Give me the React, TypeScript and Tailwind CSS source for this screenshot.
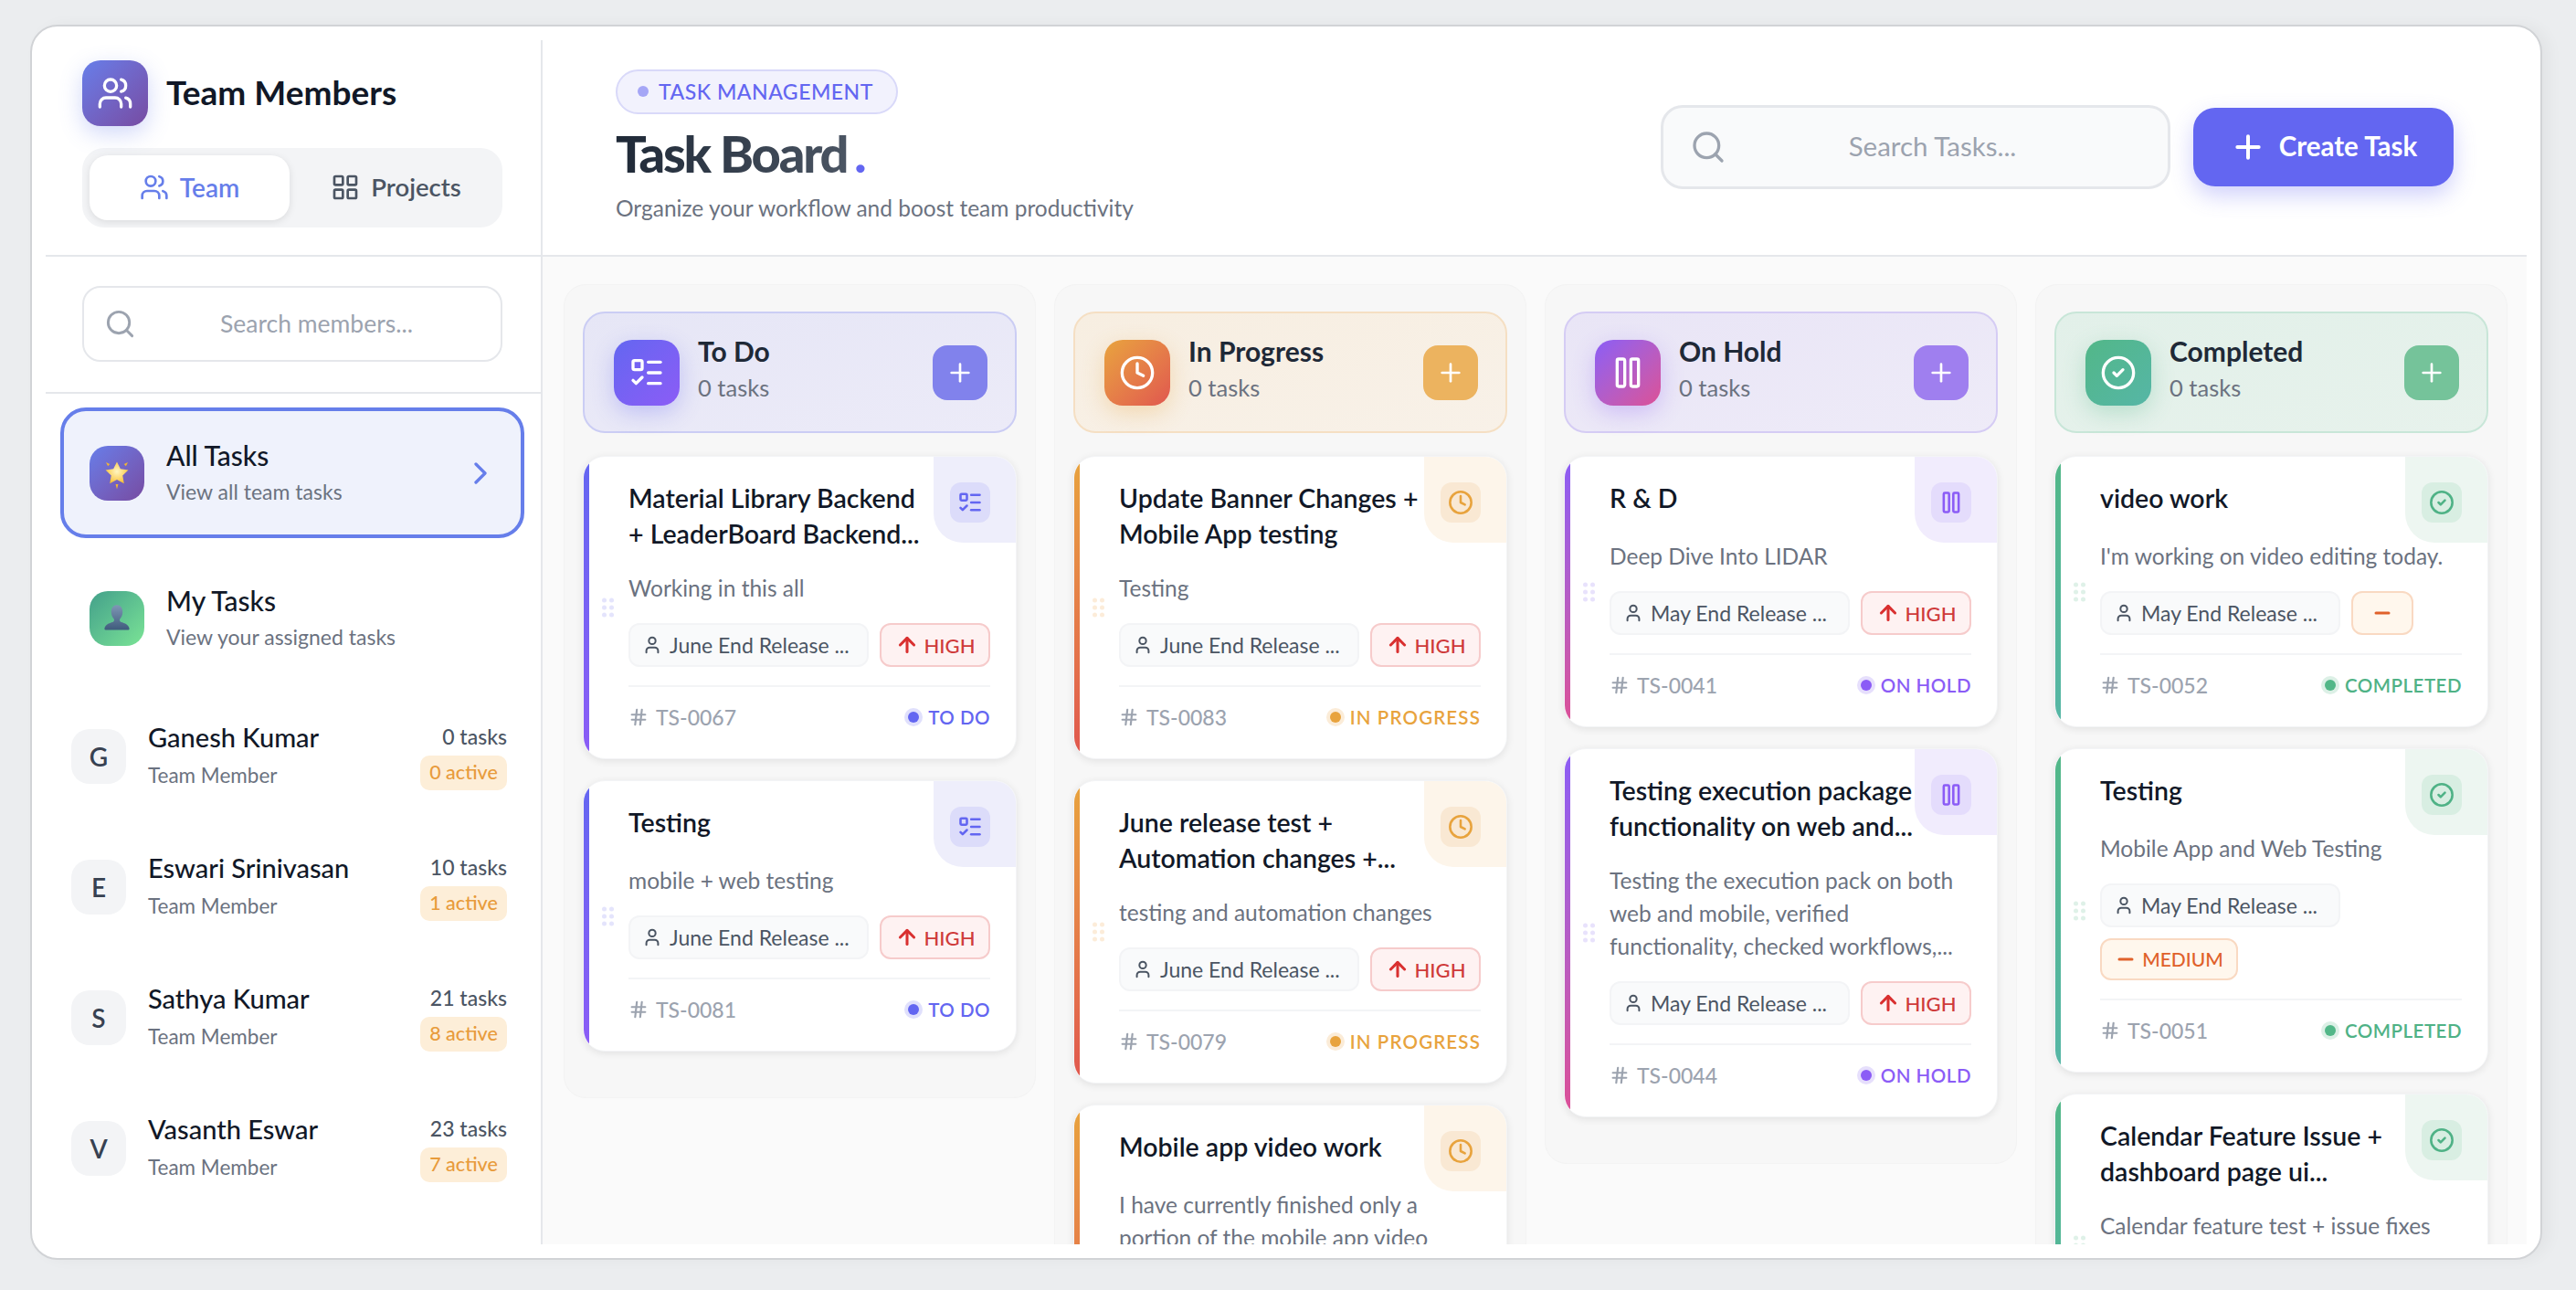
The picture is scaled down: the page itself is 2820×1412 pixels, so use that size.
import { ArrowUp, ChevronRight, CircleCheck, Clock, Hash, LayoutGrid, ListTodo, Minus, Pause, Plus, Search, User, Users } from "lucide-react";

type Status = "todo" | "progress" | "hold" | "done";
type Priority = "high" | "dash" | "medium";

interface Task {
  title: string[];
  desc: string[];
  release: string;
  priority: Priority;
  id: string;
}

const statusStyle = {
  todo: {
    name: "To Do",
    label: "TO DO",
    track: "tracking-[0.5px]",
    Icon: ListTodo,
    head: "bg-linear-to-br from-[#e6e6f6] to-[#ecebf8] border-[#cbcdf4]",
    grad: "bg-linear-to-br from-[#6366f1] to-[#8b5cf6]",
    bar: "bg-linear-to-b from-[#6366f1] to-[#8b5cf6]",
    glow: "shadow-[0_8px_24px_rgba(99,102,241,0.3)]",
    add: "bg-[#8182ec]",
    corner: "bg-[#eeeefb]",
    box: "bg-[#dcdcfa]",
    ink: "text-[#6366f1]",
    dot: "bg-[#6366f1]",
    halo: "bg-[#e0e0fc]",
    grip: "bg-[#e4e4fc]",
  },
  progress: {
    name: "In Progress",
    label: "IN PROGRESS",
    track: "tracking-[1.15px]",
    Icon: Clock,
    head: "bg-linear-to-br from-[#f7eee1] to-[#f8f1e8] border-[#f5dfc3]",
    grad: "bg-linear-to-br from-[#e8a33d] to-[#e0564e]",
    bar: "bg-linear-to-b from-[#e8a33d] to-[#e0564e]",
    glow: "shadow-[0_8px_24px_rgba(232,163,61,0.3)]",
    add: "bg-[#ecb35f]",
    corner: "bg-[#fdf5ea]",
    box: "bg-[#f9e8d3]",
    ink: "text-[#e8a33d]",
    dot: "bg-[#e8a33d]",
    halo: "bg-[#fbecd8]",
    grip: "bg-[#fcecd9]",
  },
  hold: {
    name: "On Hold",
    label: "ON HOLD",
    track: "tracking-[0.5px]",
    Icon: Pause,
    head: "bg-linear-to-br from-[#e9e5f6] to-[#eeebf8] border-[#d5ccf4]",
    grad: "bg-linear-to-br from-[#8b5cf6] to-[#dc4f96]",
    bar: "bg-linear-to-b from-[#8b5cf6] to-[#dc4f96]",
    glow: "shadow-[0_8px_24px_rgba(139,92,246,0.3)]",
    add: "bg-[#9f7fef]",
    corner: "bg-[#f1ecfd]",
    box: "bg-[#e4dcfc]",
    ink: "text-[#8b5cf6]",
    dot: "bg-[#8b5cf6]",
    halo: "bg-[#e6dffc]",
    grip: "bg-[#e8e2fc]",
  },
  done: {
    name: "Completed",
    label: "COMPLETED",
    track: "tracking-[0.5px]",
    Icon: CircleCheck,
    head: "bg-linear-to-br from-[#e2f0e9] to-[#e7f2ec] border-[#c8e6d8]",
    grad: "bg-linear-to-br from-[#52b788] to-[#56b6a6]",
    bar: "bg-linear-to-b from-[#52b788] to-[#56b6a6]",
    glow: "shadow-[0_8px_24px_rgba(82,183,136,0.3)]",
    add: "bg-[#75c39a]",
    corner: "bg-[#edf6f1]",
    box: "bg-[#d8eee2]",
    ink: "text-[#4fb286]",
    dot: "bg-[#52b788]",
    halo: "bg-[#dcf0e6]",
    grip: "bg-[#dff1e8]",
  },
} as const;

const columns: { status: Status; tasks: Task[] }[] = [
  {
    status: "todo",
    tasks: [
      { title: ["Material Library Backend", "+ LeaderBoard Backend..."], desc: ["Working in this all"], release: "June End Release ...", priority: "high", id: "TS-0067" },
      { title: ["Testing"], desc: ["mobile + web testing"], release: "June End Release ...", priority: "high", id: "TS-0081" },
    ],
  },
  {
    status: "progress",
    tasks: [
      { title: ["Update Banner Changes +", "Mobile App testing"], desc: ["Testing"], release: "June End Release ...", priority: "high", id: "TS-0083" },
      { title: ["June release test +", "Automation changes +..."], desc: ["testing and automation changes"], release: "June End Release ...", priority: "high", id: "TS-0079" },
      { title: ["Mobile app video work"], desc: ["I have currently finished only a", "portion of the mobile app video"], release: "June End Release ...", priority: "high", id: "TS-0078" },
    ],
  },
  {
    status: "hold",
    tasks: [
      { title: ["R & D"], desc: ["Deep Dive Into LIDAR"], release: "May End Release ...", priority: "high", id: "TS-0041" },
      { title: ["Testing execution package", "functionality on web and..."], desc: ["Testing the execution pack on both", "web and mobile, verified", "functionality, checked workflows,..."], release: "May End Release ...", priority: "high", id: "TS-0044" },
    ],
  },
  {
    status: "done",
    tasks: [
      { title: ["video work"], desc: ["I'm working on video editing today."], release: "May End Release ...", priority: "dash", id: "TS-0052" },
      { title: ["Testing"], desc: ["Mobile App and Web Testing"], release: "May End Release ...", priority: "medium", id: "TS-0051" },
      { title: ["Calendar Feature Issue +", "dashboard page ui..."], desc: ["Calendar feature test + issue fixes"], release: "May End Release ...", priority: "high", id: "TS-0050" },
    ],
  },
];

const members = [
  { initial: "G", name: "Ganesh Kumar", tasks: 0, active: 0 },
  { initial: "E", name: "Eswari Srinivasan", tasks: 10, active: 1 },
  { initial: "S", name: "Sathya Kumar", tasks: 21, active: 8 },
  { initial: "V", name: "Vasanth Eswar", tasks: 23, active: 7 },
];

function StarEmoji() {
  return (
    <svg width="36" height="36" viewBox="0 0 30 30">
      <defs>
        <radialGradient id="star" cx="50%" cy="45%" r="60%">
          <stop offset="0%" stopColor="#fff6c2" />
          <stop offset="100%" stopColor="#f7bd2e" />
        </radialGradient>
      </defs>
      <path d="M15 4.5l3.2 6.6 7.2 1-5.2 5 1.3 7.2-6.5-3.5-6.5 3.5 1.3-7.2-5.2-5 7.2-1z" fill="url(#star)" />
      <path d="M5 5l3.5 1.6L6.8 8.6zM25 5l-3.5 1.6 1.7 2zM13.8 25h2.4L15 29.5z" fill="#f2b632" />
    </svg>
  );
}

function PersonEmoji() {
  return (
    <svg width="34" height="34" viewBox="0 0 30 30">
      <defs>
        <linearGradient id="bust" x1="0" y1="0" x2="0" y2="1">
          <stop offset="0%" stopColor="#7f97b5" />
          <stop offset="100%" stopColor="#3f5b7c" />
        </linearGradient>
      </defs>
      <path d="M15 2c3.4 0 5.5 3 5.5 6.6 0 3-1.2 5.4-2.6 6.8-.5.6-.3 2 .5 2.6 1.4 1 8 1.6 8.6 6.8.1.7-.2 1.2-.9 1.2H3.9c-.7 0-1-.5-.9-1.2.6-5.2 7.2-5.8 8.6-6.8.8-.6 1-2 .5-2.6-1.4-1.4-2.6-3.8-2.6-6.8C9.5 5 11.6 2 15 2z" fill="url(#bust)" />
    </svg>
  );
}

function PriorityChip({ priority }: { priority: Priority }) {
  if (priority === "high") {
    return (
      <span className="flex h-[48px] w-[121px] items-center justify-center gap-[6px] rounded-[12px] border-2 border-[#f6cbcb] bg-[#fef2f2] text-[22px] font-medium text-[#cf3a3a]">
        <ArrowUp size={26} strokeWidth={2.8} className="text-[#d93030]" />
        HIGH
      </span>
    );
  }
  if (priority === "medium") {
    return (
      <span className="flex h-[46px] w-[151px] items-center justify-center gap-[6px] rounded-[12px] border-2 border-[#f9d9c2] bg-[#fff7ed] text-[21px] font-medium text-[#e0612a]">
        <Minus size={24} strokeWidth={3} />
        MEDIUM
      </span>
    );
  }
  return (
    <span className="flex h-[48px] w-[68px] items-center justify-center rounded-[12px] border-2 border-[#f9d9c2] bg-[#fff7ed] text-[#e0612a]">
      <Minus size={24} strokeWidth={3} />
    </span>
  );
}

function TaskCard({ task, status }: { task: Task; status: Status }) {
  const s = statusStyle[status];
  const Icon = s.Icon;
  return (
    <div className="relative shrink-0 overflow-hidden rounded-[24px] border border-[#f3f4f6] bg-white pb-[27px] pl-[49px] pr-[28px] pt-[26px] shadow-[0_2px_8px_rgba(0,0,0,0.09)]">
      <div className={`absolute bottom-0 left-0 top-0 w-[6px] ${s.bar}`} />
      <div className={`absolute right-0 top-0 flex h-[94px] w-[90px] justify-end rounded-bl-[32px] pr-[28px] pt-[28px] ${s.corner}`}>
        <span className={`flex size-[44px] items-center justify-center rounded-[12px] ${s.box} ${s.ink}`}>
          <Icon size={28} strokeWidth={2.2} />
        </span>
      </div>
      <div className="absolute left-[20px] top-1/2 grid -translate-y-1/2 grid-cols-2 gap-x-[3px] gap-y-[3px]">
        {[0, 1, 2, 3, 4, 5].map((i) => (
          <span key={i} className={`size-[5px] rounded-full ${s.grip}`} />
        ))}
      </div>
      <h3 className="min-h-[43px] whitespace-nowrap text-[28.5px] font-semibold leading-[39px] text-[#111827]">
        {task.title.map((line) => (
          <span key={line} className="block">{line}</span>
        ))}
      </h3>
      <div className="mt-[22px] whitespace-nowrap text-[24.5px] leading-[36px] text-[#6b7280]">
        {task.desc.map((line) => (
          <p key={line}>{line}</p>
        ))}
      </div>
      <div className="mt-[20px] flex flex-wrap gap-x-[12px] gap-y-[12px]">
        <span className="flex h-[48px] w-[263px] items-center gap-[8px] rounded-[12px] border-2 border-[#f3f4f6] bg-[#f9fafb] pl-[13px] text-[23px] text-[#4b5563]">
          <User size={22} strokeWidth={2.2} className="shrink-0" />
          <span className="whitespace-nowrap">{task.release}</span>
        </span>
        <PriorityChip priority={task.priority} />
      </div>
      <div className="mt-[20px] flex items-center justify-between border-t-2 border-[#f3f4f6] pt-[15px]">
        <span className="flex items-center gap-[8px] text-[23px] font-medium leading-[36px] text-[#9ca3af]">
          <Hash size={22} strokeWidth={2.4} />
          {task.id}
        </span>
        <span className={`flex items-center gap-[6px] text-[20.5px] font-semibold ${s.track} ${s.ink}`}>
          <span className={`flex size-[20px] items-center justify-center rounded-full ${s.halo}`}>
            <span className={`size-[12px] rounded-full ${s.dot}`} />
          </span>
          {s.label}
        </span>
      </div>
    </div>
  );
}

function BoardColumn({ status, tasks }: { status: Status; tasks: Task[] }) {
  const s = statusStyle[status];
  const Icon = s.Icon;
  return (
    <section className="w-[517px] shrink-0 rounded-[24px] border border-[#f3f3f3] bg-[#f7f7f7] px-[20px] pb-[50px] pt-[29px]">
      <header className={`flex h-[133px] items-center rounded-[24px] border-2 pl-[32px] pr-[30px] ${s.head}`}>
        <span className={`flex size-[72px] items-center justify-center rounded-[20px] text-white ${s.grad} ${s.glow}`}>
          <Icon size={40} strokeWidth={2} />
        </span>
        <div className="ml-[20px] flex-1 pb-[7px]">
          <h2 className="text-[30px] font-bold leading-[40px] text-[#1f2937]">{s.name}</h2>
          <p className="text-[25.5px] leading-[40px] text-[#6b7280]">0 tasks</p>
        </div>
        <span className={`flex size-[60px] items-center justify-center rounded-[16px] text-white ${s.add}`}>
          <Plus size={32} strokeWidth={2} />
        </span>
      </header>
      <div className="mt-[25px] flex flex-col gap-[23px]">
        {tasks.map((t) => (
          <TaskCard key={t.id} task={t} status={status} />
        ))}
      </div>
    </section>
  );
}

function NavItem({ title, sub, active, children, tone }: { title: string; sub: string; active?: boolean; children: React.ReactNode; tone: string }) {
  return (
    <div className={`flex h-[143px] items-center rounded-[28px] border-4 pl-[28px] pr-[24px] ${active ? "border-[#667eea] bg-[#eff2fc]" : "border-transparent bg-white"}`}>
      <span className={`flex size-[60px] shrink-0 items-center justify-center rounded-[20px] ${tone}`}>{children}</span>
      <div className="ml-[24px] flex-1 pb-[2px]">
        <p className="text-[30px] font-medium leading-[36px] text-[#111827]">{title}</p>
        <p className="mt-[7px] text-[23px] leading-[30px] text-[#6b7280]">{sub}</p>
      </div>
      {active && <ChevronRight size={40} strokeWidth={2} className="text-[#667eea]" />}
    </div>
  );
}

function Sidebar() {
  return (
    <aside className="flex w-[544px] shrink-0 flex-col overflow-hidden border-r-2 border-[#e5e7eb]">
      <div className="border-b-2 border-[#e5e7eb] pb-[30px] pl-[40px] pr-[42px] pt-[22px]">
        <div className="flex items-center gap-[20px]">
          <span className="flex size-[72px] items-center justify-center rounded-[20px] bg-linear-to-br from-[#667eea] to-[#764ba2] text-white shadow-[0_8px_24px_rgba(102,126,234,0.3)]">
            <Users size={40} strokeWidth={2} />
          </span>
          <h1 className="pb-[2px] text-[37px] font-bold text-[#111827]">Team Members</h1>
        </div>
        <div className="mt-[24px] flex h-[87px] rounded-[24px] bg-[#f3f4f6] p-[8px]">
          <button className="flex w-[219px] items-center justify-center gap-[12px] rounded-[20px] bg-white pb-[2px] text-[28px] font-semibold text-[#667eea] shadow-[0_2px_8px_rgba(0,0,0,0.1)]">
            <Users size={32} strokeWidth={2} />
            Team
          </button>
          <button className="flex flex-1 items-center justify-center gap-[12px] pb-[2px] pl-[8px] text-[27.5px] font-semibold text-[#4b5563]">
            <LayoutGrid size={32} strokeWidth={2} />
            Projects
          </button>
        </div>
      </div>
      <div className="border-b-2 border-[#e5e7eb] pb-[33px] pl-[40px] pr-[42px] pt-[32px]">
        <div className="flex h-[83px] items-center rounded-[20px] border-2 border-[#e5e7eb] bg-white pl-[22px] pr-[20px] text-[#9ca3af]">
          <Search size={35} strokeWidth={2} className="shrink-0" />
          <span className="flex-1 pl-[16px] text-center text-[26.5px]">Search members...</span>
        </div>
      </div>
      <div className="flex flex-col pl-[16px] pr-[18px] pt-[15px]">
        <NavItem title="All Tasks" sub="View all team tasks" active tone="bg-linear-to-br from-[#667eea] to-[#764ba2]">
          <StarEmoji />
        </NavItem>
        <div className="mt-[16px]">
          <NavItem title="My Tasks" sub="View your assigned tasks" tone="bg-linear-to-br from-[#43a08a] to-[#7be495]">
            <PersonEmoji />
          </NavItem>
        </div>
        <div className="mt-[8px] flex flex-col">
          {members.map((m) => (
            <div key={m.name} className="flex h-[143px] items-center pl-[12px] pr-[19px]">
              <span className="flex size-[60px] shrink-0 items-center justify-center rounded-[20px] bg-[#f3f4f6] text-[28px] font-semibold text-[#374151]">{m.initial}</span>
              <div className="ml-[24px] flex-1 pb-[2px]">
                <p className="text-[29px] font-medium leading-[36px] text-[#111827]">{m.name}</p>
                <p className="mt-[9px] text-[22.5px] leading-[30px] text-[#6b7280]">Team Member</p>
              </div>
              <div className="flex flex-col items-end gap-[6px]">
                <span className="text-[23px] font-medium leading-[30px] text-[#4b5563]">{m.tasks} tasks</span>
                <span className="flex h-[38px] w-[95px] items-center justify-center rounded-[10px] bg-[#fdeed8] text-[21.5px] font-medium text-[#e89b3b]">{m.active} active</span>
              </div>
            </div>
          ))}
        </div>
      </div>
    </aside>
  );
}

function MainHeader() {
  return (
    <header className="flex h-[237px] shrink-0 items-center justify-between border-b-2 border-[#e5e7eb] bg-white pb-[2px] pl-[80px] pr-[80px]">
      <div>
        <span className="inline-flex h-[49px] items-center gap-[11px] rounded-full border-2 border-[#d9d9f9] bg-[#f2f2fd] pl-[22px] pr-[25px] text-[23px] font-medium tracking-[0.5px] text-[#6366f1]">
          <span className="size-[12px] rounded-full bg-[#a5a6f6]" />
          TASK MANAGEMENT
        </span>
        <h1 className="mt-[7px] text-[56px] font-black leading-[72px] tracking-[-2.2px]">
          <span className="bg-linear-to-r from-[#1f2937] to-[#4b5563] bg-clip-text text-transparent">Task Board</span>
          <span className="ml-[8px] text-[#6366f1]">.</span>
        </h1>
        <p className="mt-[6px] text-[24.5px] leading-[36px] text-[#6b7280]">Organize your workflow and boost team productivity</p>
      </div>
      <div className="flex items-center gap-[25px]">
        <div className="flex h-[92px] w-[558px] items-center rounded-[24px] border-[3px] border-[#e5e7eb] bg-[#f9fafb] pl-[29px] pr-[20px] text-[#9ca3af]">
          <Search size={40} strokeWidth={2} className="shrink-0" />
          <span className="flex-1 pr-[12px] text-center text-[29.5px]">Search Tasks...</span>
        </div>
        <button className="flex h-[86px] w-[285px] items-center justify-center gap-[14px] rounded-[24px] bg-[#6366f1] text-[29.5px] font-bold text-white shadow-[0_10px_24px_rgba(99,102,241,0.3)]">
          <Plus size={40} strokeWidth={2.4} />
          Create Task
        </button>
      </div>
    </header>
  );
}

export default function App() {
  return (
    <div className="h-[1412px] w-[2820px] overflow-hidden bg-[#ebedef] pb-[33px] pl-[33px] pr-[37px] pt-[27px] font-[Lato,'Noto_Sans',sans-serif]">
      <div className="flex h-full rounded-[30px] border-2 border-[#d1d3d6] bg-white p-[15px] shadow-[8px_0_16px_rgba(0,0,0,0.04)]">
        <Sidebar />
        <main className="flex min-w-0 flex-1 flex-col overflow-hidden">
          <MainHeader />
          <div className="flex flex-1 items-start gap-[20px] overflow-hidden bg-[#fafafa] pl-[23px] pt-[30px]">
            {columns.map((c) => (
              <BoardColumn key={c.status} status={c.status} tasks={c.tasks} />
            ))}
          </div>
        </main>
      </div>
    </div>
  );
}
